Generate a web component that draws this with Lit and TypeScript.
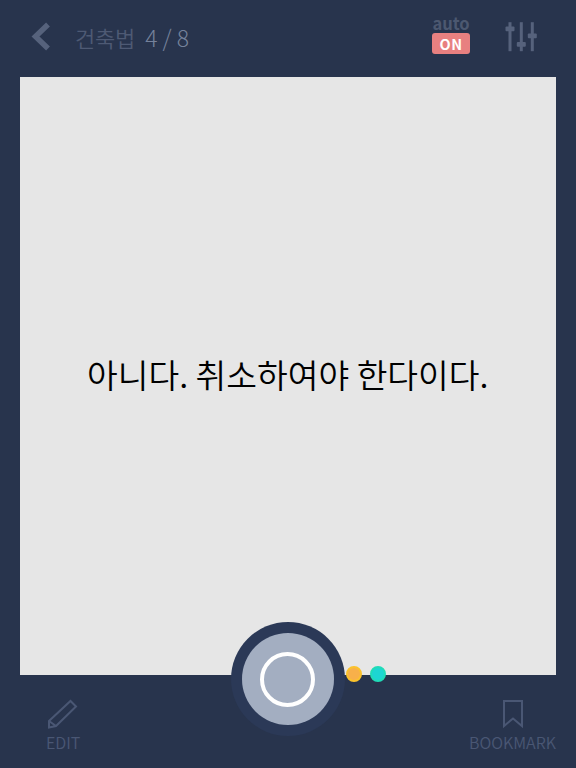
import { LitElement, html, css } from "lit";
import { customElement } from "lit/decorators.js";

@customElement("app-root")
export class AppRoot extends LitElement {
  static styles = css`
    :host {
      display: block;
      width: 576px;
      height: 768px;
      background: #28344d;
      font-family: "Noto Sans CJK KR", "Noto Sans", sans-serif;
      overflow: hidden;
    }
    .page {
      position: relative;
      display: flex;
      flex-direction: column;
      height: 768px;
    }
    .top {
      height: 77px;
      display: flex;
      align-items: center;
      padding: 0 38px 4px 30px;
      box-sizing: border-box;
    }
    .back { width: 22px; height: 30px; display: block; }
    .title {
      margin-left: 23px;
      font-size: 22px;
      color: #4e5a74;
      line-height: 30px;
      letter-spacing: -0.2px;
      font-weight: 350;
    }
    .count {
      margin-left: 10px;
      font-size: 23px;
      line-height: 30px;
      color: #75829b;
      font-weight: 300;
      letter-spacing: 0;
    }
    .spacer { flex: 1; }
    .auto {
      display: flex;
      flex-direction: column;
      align-items: center;
      gap: 3px;
      margin-right: 34px;
      margin-top: -3px;
    }
    .auto-label {
      font-size: 16.5px;
      line-height: 13px;
      font-weight: 700;
      color: #4c5870;
    }
    .on {
      width: 38px;
      height: 21px;
      border-radius: 3px;
      background: #e88080;
      color: #fff;
      font-size: 14.5px;
      font-weight: 700;
      line-height: 21px;
      text-align: center;
      letter-spacing: 0.5px;
    }
    .sliders { width: 34px; height: 30px; display: block; }
    .card {
      margin: 0 20.5px 0 20px;
      height: 598px;
      background: #e6e6e6;
      display: flex;
      align-items: center;
      justify-content: center;
      color: #000;
      font-size: 33.4px;
      font-weight: 350;
      line-height: 48px;
      padding-bottom: 4px;
      box-sizing: border-box;
    }
    .bottom {
      flex: 1;
      display: flex;
      justify-content: space-between;
      align-items: flex-start;
      padding: 24px 20px 0 46px;
    }
    .tool {
      display: flex;
      flex-direction: column;
      align-items: center;
      color: #4a5774;
      font-size: 16px;
      font-weight: 350;
      line-height: 22px;
    }
    .tool svg { display: block; margin-bottom: 2px; }
    .record {
      position: absolute;
      left: 230.5px;
      top: 622px;
      width: 114px;
      height: 114px;
      border-radius: 50%;
      background: #2b3957;
      display: flex;
      align-items: center;
      justify-content: center;
    }
    .record-inner {
      width: 92px;
      height: 92px;
      border-radius: 50%;
      background: #a3aec1;
      display: flex;
      align-items: center;
      justify-content: center;
    }
    .record-ring {
      width: 47px;
      height: 47px;
      border: 4px solid #fff;
      border-radius: 50%;
    }
    .dot {
      position: absolute;
      top: 666px;
      width: 12px;
      height: 12px;
      border-radius: 50%;
      border: 2px solid;
    }
    .dot.orange { left: 346px; background: #f8b04a; border-color: #fbc22c; }
    .dot.teal { left: 370px; background: #1dd6d2; border-color: #20dcb8; }
  `;

  render() {
    return html`
      <div class="page">
        <header class="top">
          <svg class="back" viewBox="0 0 22 30">
            <path d="M18 2.5 L5.5 14.5 L18 26.5" fill="none" stroke="#56627c" stroke-width="5.5" />
          </svg>
          <span class="title">건축법</span>
          <span class="count">4 / 8</span>
          <span class="spacer"></span>
          <div class="auto">
            <span class="auto-label">auto</span>
            <span class="on">ON</span>
          </div>
          <svg class="sliders" viewBox="0 0 34 30" fill="#56627c">
            <rect x="4.5" y="0.2" width="3" height="29" />
            <rect x="1.5" y="4.5" width="9" height="4.7" rx="1" />
            <rect x="15.8" y="0.2" width="3" height="29" />
            <rect x="12.8" y="20" width="9" height="4.7" rx="1" />
            <rect x="26.8" y="0.2" width="3" height="29" />
            <rect x="23.8" y="11.5" width="9" height="4.7" rx="1" />
          </svg>
        </header>
        <main class="card">아니다. 취소하여야 한다이다.</main>
        <footer class="bottom">
          <div class="tool">
            <svg width="32" height="30" viewBox="0 0 32 30" fill="none" stroke="#4a5774" stroke-width="2">
              <path d="M2 22 L23.5 2 L29 7.5 L9 27 L2 28.5 Z M2 22 L9 27" />
            </svg>
            <span>EDIT</span>
          </div>
          <div class="tool">
            <svg width="22" height="30" viewBox="0 0 22 30" fill="none" stroke="#4a5774" stroke-width="2">
              <path d="M2 2 H20 V27 L11 19.5 L2 27 Z" />
            </svg>
            <span>BOOKMARK</span>
          </div>
        </footer>
        <div class="record">
          <div class="record-inner"><div class="record-ring"></div></div>
        </div>
        <span class="dot orange"></span>
        <span class="dot teal"></span>
      </div>
    `;
  }
}
